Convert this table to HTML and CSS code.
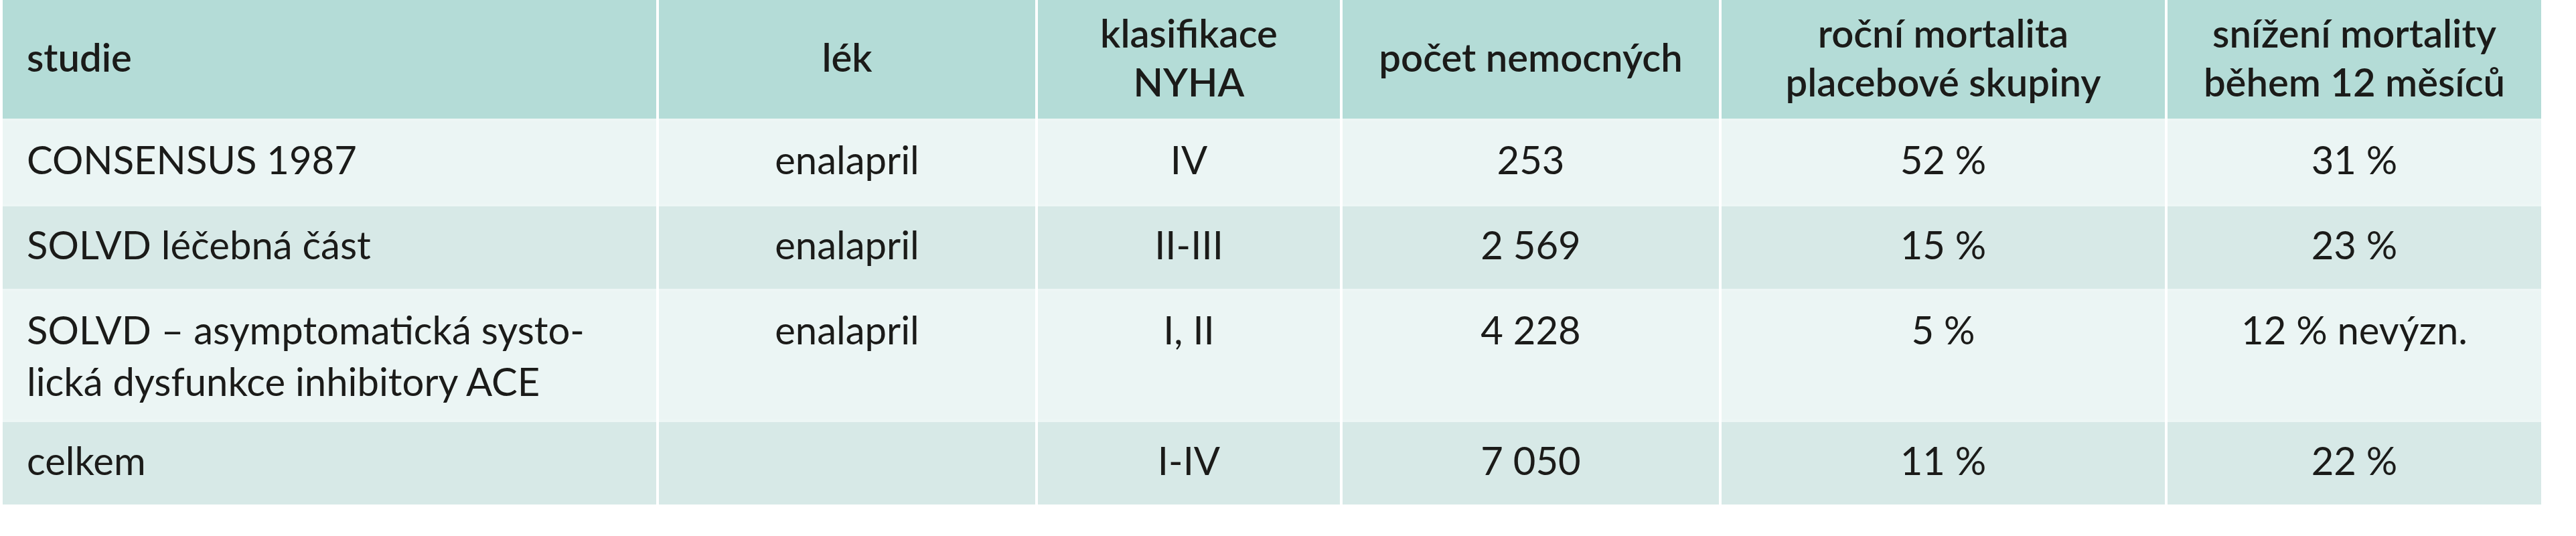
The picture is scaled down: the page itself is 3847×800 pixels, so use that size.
FILE: index.html
```html
<!DOCTYPE html>
<html lang="cs">
<head>
<meta charset="utf-8">
<title>Studie inhibitorů ACE</title>
<link rel="stylesheet" href="styles.css">
</head>
<body>
<table class="tbl">
  <colgroup>
    <col class="c1"><col class="c2"><col class="c3"><col class="c4"><col class="c5"><col class="c6">
  </colgroup>
  <thead>
    <tr class="head">
      <th class="left">studie</th>
      <th>lék</th>
      <th>klasifikace<br>NYHA</th>
      <th>počet nemocných</th>
      <th>roční mortalita<br>placebové skupiny</th>
      <th>snížení mortality<br>během 12 měsíců</th>
    </tr>
  </thead>
  <tbody>
    <tr class="row light">
      <td class="left">CONSENSUS 1987</td>
      <td>enalapril</td>
      <td>IV</td>
      <td>253</td>
      <td>52 %</td>
      <td>31 %</td>
    </tr>
    <tr class="row dark">
      <td class="left">SOLVD léčebná část</td>
      <td>enalapril</td>
      <td>II-III</td>
      <td>2 569</td>
      <td>15 %</td>
      <td>23 %</td>
    </tr>
    <tr class="row light">
      <td class="left">SOLVD – asymptomatická systo-<br>lická dysfunkce inhibitory ACE</td>
      <td>enalapril</td>
      <td>I, II</td>
      <td>4 228</td>
      <td>5 %</td>
      <td>12 % nevýzn.</td>
    </tr>
    <tr class="row dark">
      <td class="left">celkem</td>
      <td></td>
      <td>I-IV</td>
      <td>7 050</td>
      <td>11 %</td>
      <td>22 %</td>
    </tr>
  </tbody>
</table>
</body>
</html>
```

FILE: styles.css
```css
html, body {
  margin: 0;
  padding: 0;
  background: #ffffff;
}

body {
  font-family: "Lato", "Open Sans", "Liberation Sans", sans-serif;
  font-size: 58px;
  color: #1b1b19;
}

.tbl {
  table-layout: fixed;
  border-collapse: separate;
  border-spacing: 4px 0;
  width: 3799px;
}

.c1 { width: 976px; }
.c2 { width: 562px; }
.c3 { width: 451px; }
.c4 { width: 562px; }
.c5 { width: 662px; }
.c6 { width: 558px; }

.head {
  height: 177px;
}

.head th {
  background: #b4dcd7;
  font-weight: 600;
  line-height: 73px;
  padding: 0 16px 8px;
  text-align: center;
  vertical-align: middle;
}

.row {
  height: 127px;
}

.row td {
  border-top: 4px solid #edf6f5;
  padding: 18px 16px 19px;
  line-height: 77px;
  text-align: center;
  vertical-align: top;
}

.light td { background: #ebf5f4; }
.dark td { background: #d7e9e7; }

.tbl .left {
  text-align: left;
  padding-left: 36px;
}
```
